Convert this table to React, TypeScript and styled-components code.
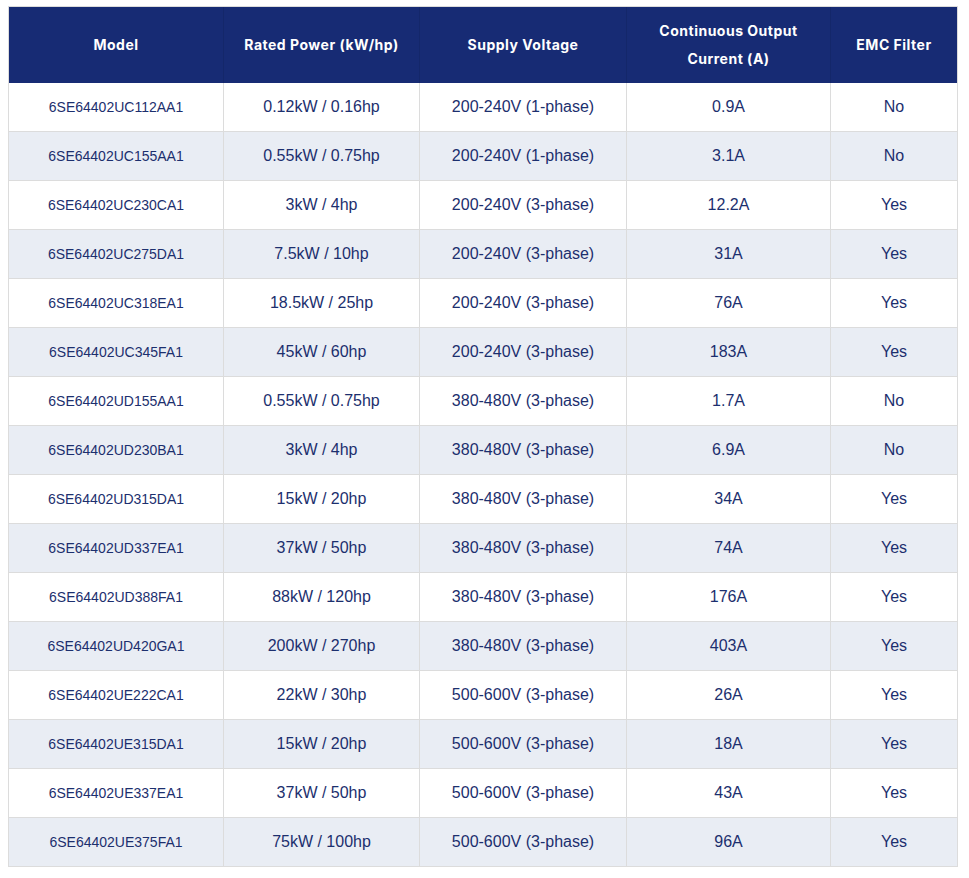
import React from "react";
import styled, { createGlobalStyle } from "styled-components";

const GlobalStyle = createGlobalStyle`
  html, body {
    margin: 0;
    padding: 0;
    background: #ffffff;
  }
`;

const Page = styled.div`
  padding: 6px 8px;
`;

const SpecTable = styled.table`
  width: 950px;
  table-layout: fixed;
  border-collapse: separate;
  border-spacing: 0;
  border-top: 1px solid #dcdcdc;
  border-left: 1px solid #dcdcdc;
`;

const HeadCell = styled.th<{ $w: number; $last?: boolean }>`
  box-sizing: border-box;
  width: ${(p) => p.$w}px;
  height: 76px;
  padding: 10px 12px;
  background: #172b74;
  color: #ffffff;
  font-family: "Inter", "Open Sans", sans-serif;
  font-weight: 700;
  font-size: 14px;
  letter-spacing: 0.5px;
  line-height: 28px;
  text-align: center;
  vertical-align: middle;
  border-right: 1px solid ${(p) => (p.$last ? "#dcdcdc" : "#14276a")};
`;

const Row = styled.tr<{ $striped: boolean }>`
  background: ${(p) => (p.$striped ? "#e9edf4" : "#ffffff")};
`;

const Cell = styled.td<{ $small?: boolean }>`
  box-sizing: border-box;
  height: 49px;
  padding: 0 10px;
  color: #1c2f6e;
  font-family: "Liberation Sans", Arial, sans-serif;
  font-size: ${(p) => (p.$small ? "14px" : "16px")};
  text-align: center;
  vertical-align: middle;
  border-right: 1px solid #dcdcdc;
  border-bottom: 1px solid #dcdcdc;
`;

const columns = [
  { title: "Model", width: 215 },
  { title: "Rated Power (kW/hp)", width: 196 },
  { title: "Supply Voltage", width: 207 },
  { title: "Continuous Output Current (A)", width: 204 },
  { title: "EMC Filter", width: 127 },
];

const rows: [string, string, string, string, string][] = [
  ["6SE64402UC112AA1", "0.12kW / 0.16hp", "200-240V (1-phase)", "0.9A", "No"],
  ["6SE64402UC155AA1", "0.55kW / 0.75hp", "200-240V (1-phase)", "3.1A", "No"],
  ["6SE64402UC230CA1", "3kW / 4hp", "200-240V (3-phase)", "12.2A", "Yes"],
  ["6SE64402UC275DA1", "7.5kW / 10hp", "200-240V (3-phase)", "31A", "Yes"],
  ["6SE64402UC318EA1", "18.5kW / 25hp", "200-240V (3-phase)", "76A", "Yes"],
  ["6SE64402UC345FA1", "45kW / 60hp", "200-240V (3-phase)", "183A", "Yes"],
  ["6SE64402UD155AA1", "0.55kW / 0.75hp", "380-480V (3-phase)", "1.7A", "No"],
  ["6SE64402UD230BA1", "3kW / 4hp", "380-480V (3-phase)", "6.9A", "No"],
  ["6SE64402UD315DA1", "15kW / 20hp", "380-480V (3-phase)", "34A", "Yes"],
  ["6SE64402UD337EA1", "37kW / 50hp", "380-480V (3-phase)", "74A", "Yes"],
  ["6SE64402UD388FA1", "88kW / 120hp", "380-480V (3-phase)", "176A", "Yes"],
  ["6SE64402UD420GA1", "200kW / 270hp", "380-480V (3-phase)", "403A", "Yes"],
  ["6SE64402UE222CA1", "22kW / 30hp", "500-600V (3-phase)", "26A", "Yes"],
  ["6SE64402UE315DA1", "15kW / 20hp", "500-600V (3-phase)", "18A", "Yes"],
  ["6SE64402UE337EA1", "37kW / 50hp", "500-600V (3-phase)", "43A", "Yes"],
  ["6SE64402UE375FA1", "75kW / 100hp", "500-600V (3-phase)", "96A", "Yes"],
];

export default function App() {
  return (
    <Page>
      <GlobalStyle />
      <SpecTable>
        <thead>
          <tr>
            {columns.map((c, i) => (
              <HeadCell key={c.title} $w={c.width} $last={i === columns.length - 1}>
                {c.title === "Continuous Output Current (A)" ? (
                  <>
                    Continuous Output
                    <br />
                    Current (A)
                  </>
                ) : (
                  c.title
                )}
              </HeadCell>
            ))}
          </tr>
        </thead>
        <tbody>
          {rows.map((r, i) => (
            <Row key={r[0]} $striped={i % 2 === 1}>
              {r.map((v, j) => (
                <Cell key={j} $small={j === 0}>
                  {v}
                </Cell>
              ))}
            </Row>
          ))}
        </tbody>
      </SpecTable>
    </Page>
  );
}
